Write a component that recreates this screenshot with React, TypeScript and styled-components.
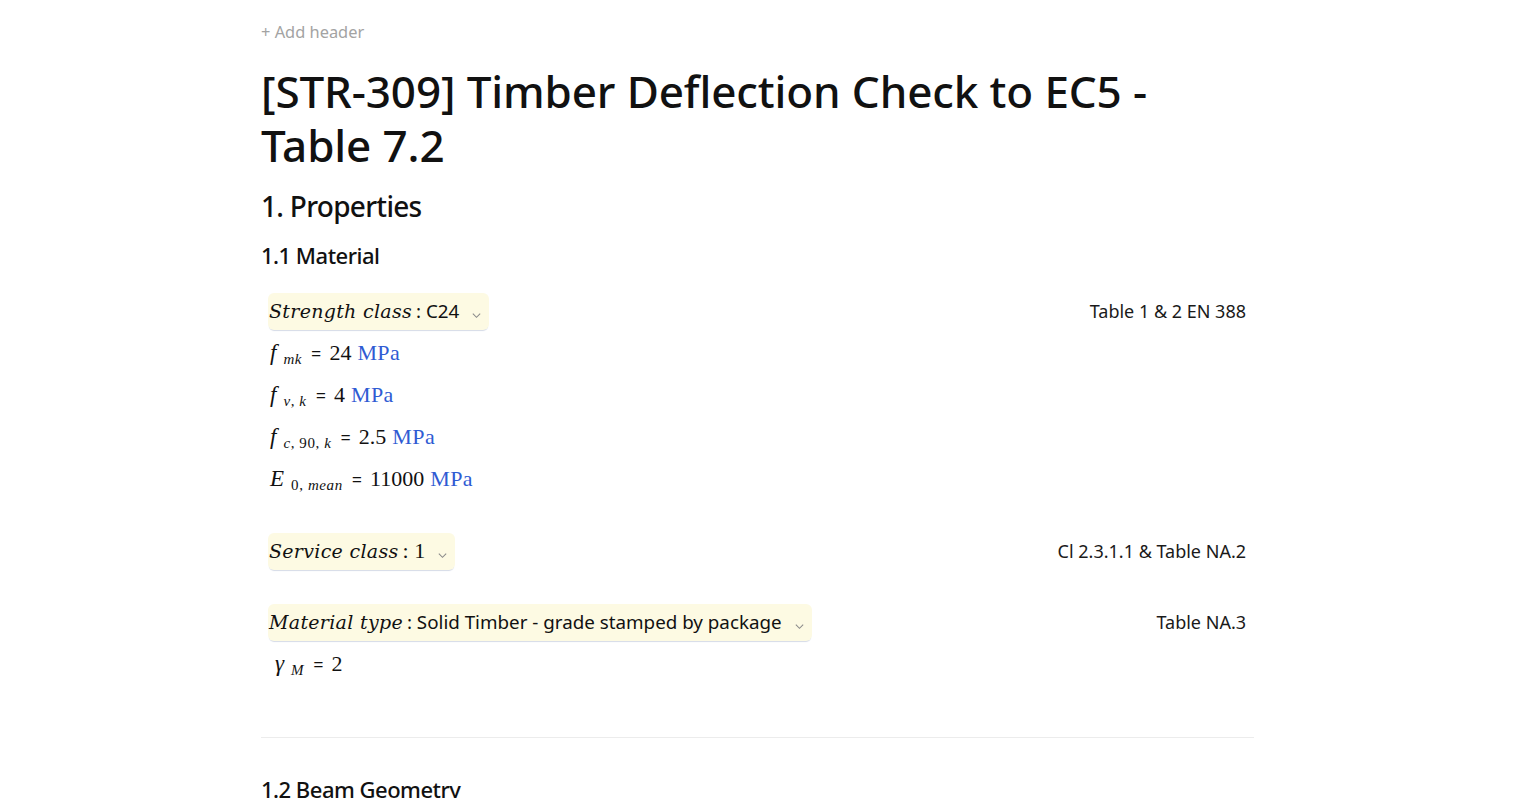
import styled, { createGlobalStyle } from 'styled-components';

const GlobalStyle = createGlobalStyle`
  html, body {
    margin: 0;
    padding: 0;
    background: #ffffff;
    color: #111111;
    font-family: "Noto Sans", "Open Sans", sans-serif;
    overflow: hidden;
  }
`;

const Page = styled.div`
  width: 993px;
  margin-left: 261px;
  padding-top: 19px;
`;

const AddHeader = styled.div`
  font-size: 16.4px;
  color: #a3a3a3;
  height: 26px;
  line-height: 26px;
`;

const Title = styled.h1`
  margin: 19px 0 0;
  font-size: 44px;
  font-weight: 500;
  line-height: 54px;
  letter-spacing: -0.12px;
`;

const H2 = styled.h2`
  margin: 14px 0 0;
  font-size: 28px;
  font-weight: 500;
  line-height: 40px;
  letter-spacing: -0.7px;
`;

const H3 = styled.h3<{ $top?: number }>`
  margin: ${(p) => p.$top ?? 12}px 0 0;
  font-size: 22px;
  font-weight: 500;
  line-height: 34px;
  letter-spacing: -0.5px;
`;

const Row = styled.div<{ $top?: number }>`
  display: flex;
  align-items: center;
  justify-content: space-between;
  padding: 0 8px 0 7px;
  margin-top: ${(p) => p.$top ?? 0}px;
  min-height: 42px;
`;

const Select = styled.div`
  display: inline-flex;
  align-items: center;
  height: 37px;
  padding: 0 7px 0 1px;
  background: #fdfae3;
  border-radius: 6px;
  box-shadow: 0 2px 1px -1px #d5dbe7;
`;

const Label = styled.span`
  font-family: "DejaVu Serif", "Liberation Serif", serif;
  font-style: italic;
  font-size: 19px;
  letter-spacing: 0.3px;
`;

const Value = styled.span<{ $serif?: boolean }>`
  font-family: ${(p) => (p.$serif ? '"Liberation Serif", serif' : '"Noto Sans", sans-serif')};
  font-size: ${(p) => (p.$serif ? '22px' : '18.8px')};
  margin-left: 4px;
`;

const Chevron = styled.svg`
  margin-left: 12px;
  width: 11px;
  height: 11px;
  margin-top: 8px;
`;

const Ref = styled.span`
  font-size: 18px;
  color: #1a1a1a;
`;

const MathLine = styled.div<{ $indent?: number }>`
  font-family: "Liberation Serif", serif;
  font-size: 22px;
  height: 42px;
  line-height: 42px;
  padding-left: ${(p) => p.$indent ?? 9}px;
`;

const Sym = styled.i`
  font-family: "Liberation Serif", serif;
  font-size: 23px;
`;

const Sub = styled.sub`
  font-size: 15px;
  margin-left: 7px;
  vertical-align: -4px;
  line-height: 0;
  letter-spacing: 0.6px;
  & i {
    font-style: italic;
  }
`;

const Eq = styled.span`
  font-family: "Noto Sans", sans-serif;
  font-size: 18px;
  margin: 0 8px 0 9px;
`;

const Unit = styled.span`
  color: #2f5bd3;
  margin-left: 6px;
  letter-spacing: 0.4px;
`;

const Divider = styled.hr`
  border: none;
  border-top: 1px solid #ececec;
  margin: 52px 0 0;
`;

function ChevronDown() {
  return (
    <Chevron viewBox="0 0 12 12" fill="none" stroke="#8a8a8a" strokeWidth="1.1">
      <path d="M2 4l4 4 4-4" />
    </Chevron>
  );
}

type Q = { sym: string; sub: string[]; val: string; unit?: string };

const quantities: Q[] = [
  { sym: 'f', sub: ['mk'], val: '24', unit: 'MPa' },
  { sym: 'f', sub: ['v', 'k'], val: '4', unit: 'MPa' },
  { sym: 'f', sub: ['c', '90', 'k'], val: '2.5', unit: 'MPa' },
  { sym: 'E', sub: ['0', 'mean'], val: '11000', unit: 'MPa' },
];

function Quantity({ q }: { q: Q }) {
  return (
    <MathLine>
      <Sym>{q.sym}</Sym>
      <Sub>
        {q.sub.map((s, i) => (
          <span key={i}>
            {i > 0 && ', '}
            {/^\d+$/.test(s) ? s : <i>{s}</i>}
          </span>
        ))}
      </Sub>
      <Eq>=</Eq>
      {q.val}
      {q.unit && <Unit>{q.unit}</Unit>}
    </MathLine>
  );
}

export default function App() {
  return (
    <>
      <GlobalStyle />
      <Page>
        <AddHeader>+ Add header</AddHeader>
        <Title>
          [STR-309] Timber Deflection Check to EC5 -<br />Table 7.2
        </Title>
        <H2>1. Properties</H2>
        <H3>1.1 Material</H3>

        <Row $top={18}>
          <Select>
            <Label>Strength class</Label>
            <Value> : C24</Value>
            <ChevronDown />
          </Select>
          <Ref>Table 1 &amp; 2 EN 388</Ref>
        </Row>
        {quantities.map((q, i) => (
          <Quantity key={i} q={q} />
        ))}

        <Row $top={30}>
          <Select>
            <Label>Service class</Label>
            <Value $serif> : 1</Value>
            <ChevronDown />
          </Select>
          <Ref>Cl 2.3.1.1 &amp; Table NA.2</Ref>
        </Row>

        <Row $top={29}>
          <Select>
            <Label>Material type</Label>
            <Value> : Solid Timber - grade stamped by package</Value>
            <ChevronDown />
          </Select>
          <Ref>Table NA.3</Ref>
        </Row>
        <MathLine $indent={14}>
          <Sym>γ</Sym>
          <Sub>
            <i>M</i>
          </Sub>
          <Eq>=</Eq>2
        </MathLine>

        <Divider />
        <H3 $top={34}>1.2 Beam Geometry</H3>
      </Page>
    </>
  );
}
